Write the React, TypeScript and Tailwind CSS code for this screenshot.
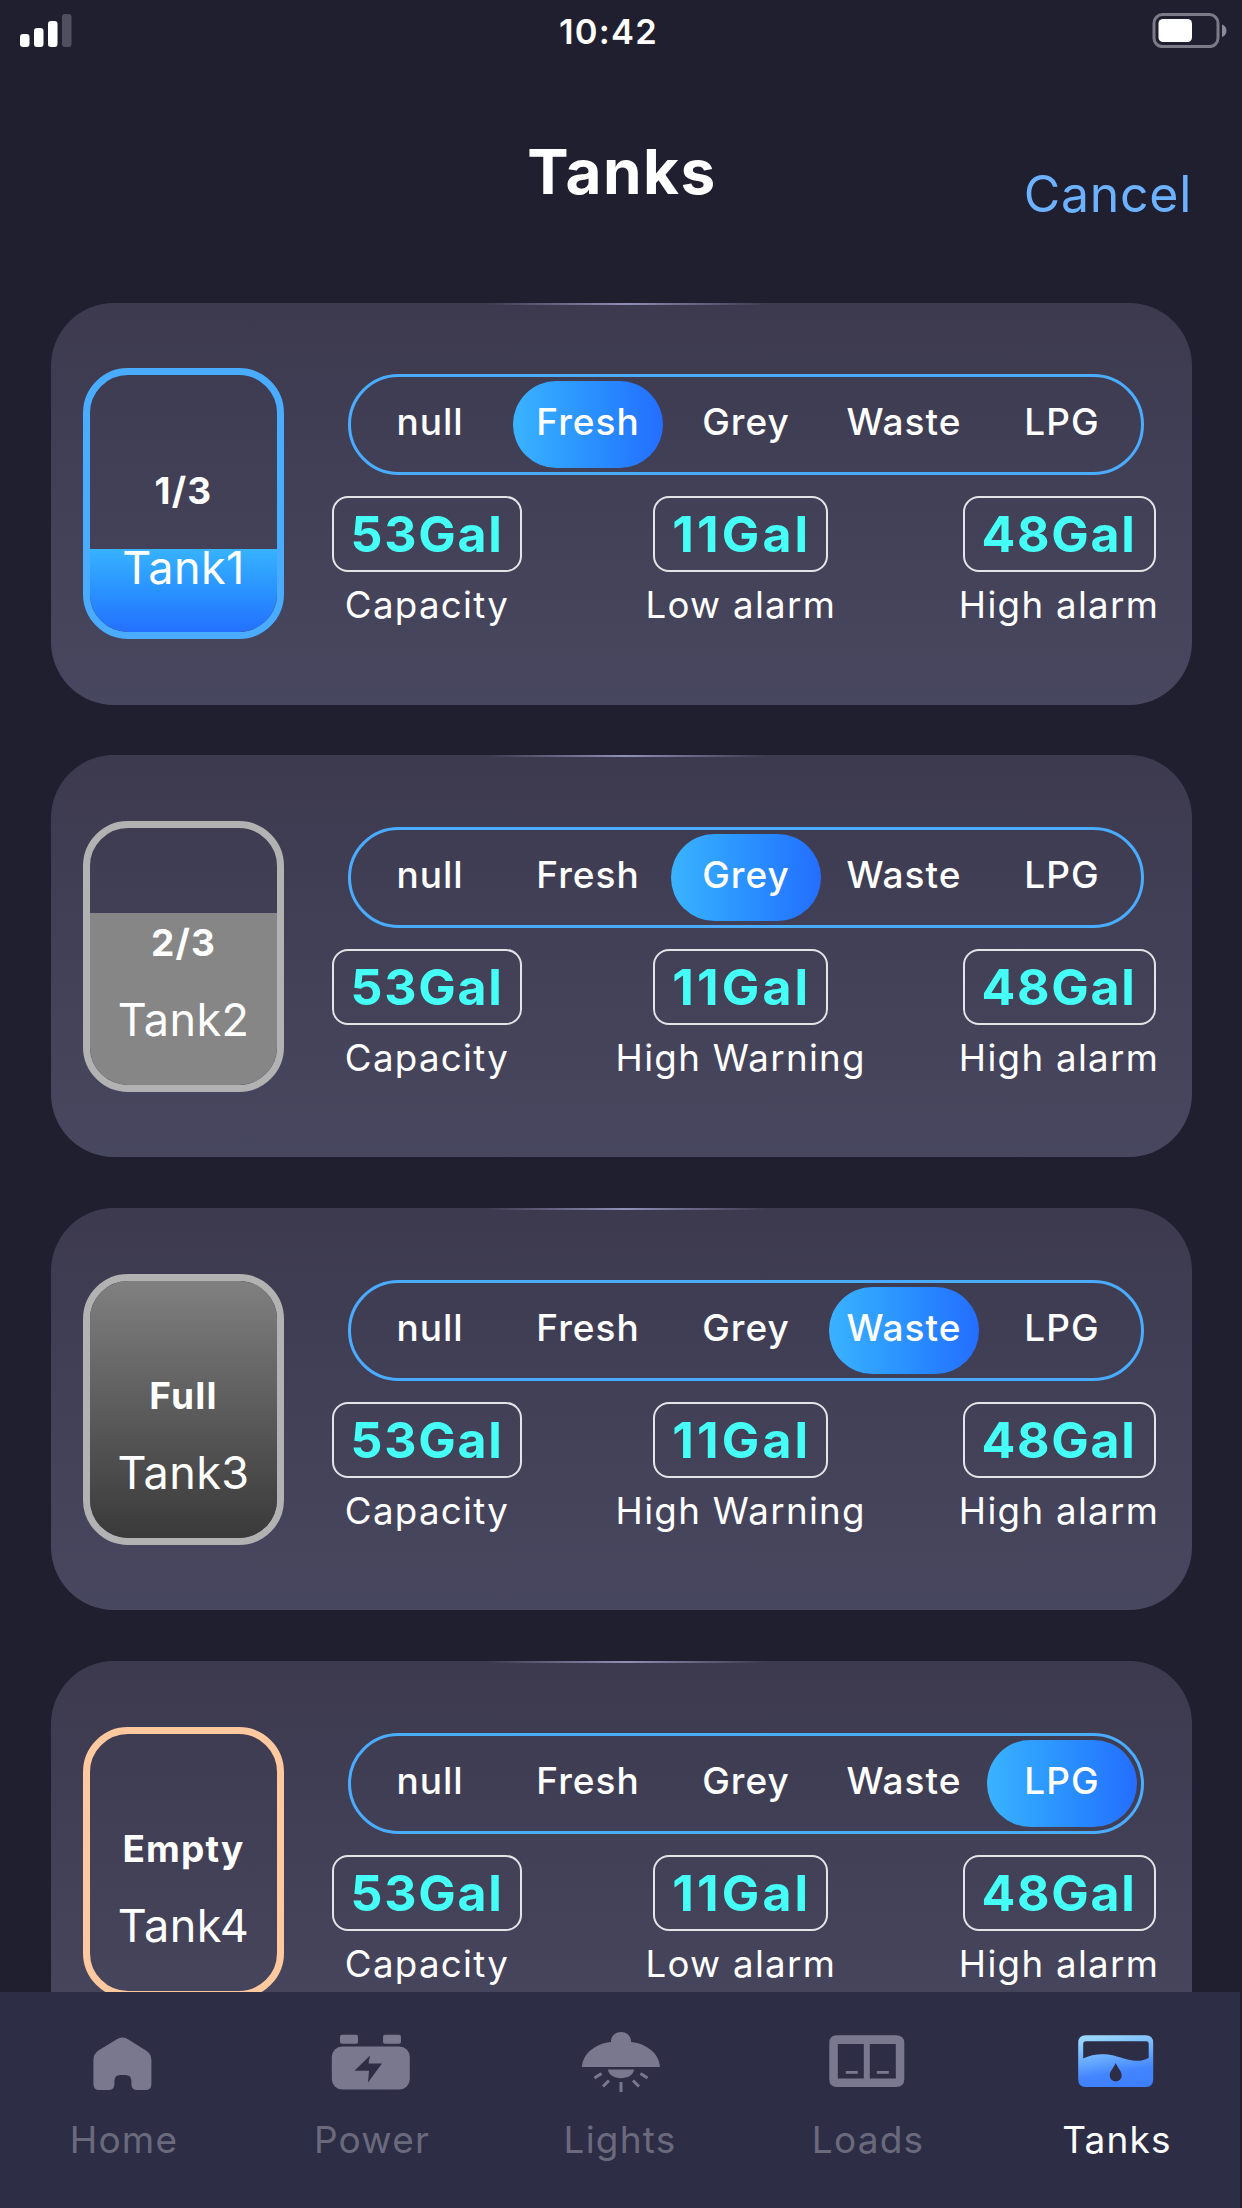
import React from "react";

type Tank = {
  name: string;
  level: string;
  type: string;
  border: string;
  fill: string;
  middle: string;
};

const TYPES = ["null", "Fresh", "Grey", "Waste", "LPG"];

const TANKS: Tank[] = [
  { name: "Tank1", level: "1/3", type: "Fresh", border: "border-[#4aacff]", fill: "h-[83px] bg-linear-to-b from-[#38b2ff] to-[#2570ff]", middle: "Low alarm" },
  { name: "Tank2", level: "2/3", type: "Grey", border: "border-[#b2b2b2]", fill: "h-[172px] bg-[#868686]", middle: "High Warning" },
  { name: "Tank3", level: "Full", type: "Waste", border: "border-[#b2b2b2]", fill: "h-full bg-linear-to-b from-[#808080] to-[#3a3a3a]", middle: "High Warning" },
  { name: "Tank4", level: "Empty", type: "LPG", border: "border-[#ffc9a0]", fill: "h-0", middle: "Low alarm" },
];

function StatusBar() {
  return (
    <div className="flex h-[60px] items-center justify-between pl-[20px] pr-[14px]">
      <svg width="52" height="36" viewBox="0 0 52 36">
        <g fill="#fff">
          <rect x="0" y="22" width="9.5" height="13" rx="3" />
          <rect x="14" y="16" width="9.5" height="19" rx="3" />
          <rect x="28" y="9" width="9.5" height="26" rx="3" />
          <rect x="42" y="2" width="9.5" height="33" rx="3" fill="#504f5e" />
        </g>
      </svg>
      <div className="-ml-[7px] pt-[5px] text-[34.5px] font-semibold leading-none tracking-[1.2px] text-white">10:42</div>
      <svg width="76" height="36" viewBox="0 0 76 36">
        <rect x="2" y="2.6" width="64" height="32" rx="8.5" fill="none" stroke="#7b7a86" strokeWidth="3" />
        <rect x="6.500" y="7" width="33.500" height="23" rx="4.5" fill="#fff" />
        <path d="M70 12.500c6 2 6 10.500 0 12.500z" fill="#8b8a96" />
      </svg>
    </div>
  );
}

function TankGauge({ tank }: { tank: Tank }) {
  return (
    <div className={`relative flex h-[271px] w-[201px] shrink-0 flex-col justify-end overflow-hidden rounded-[45px] border-[7px] ${tank.border}`}>
      <div className={tank.fill} />
      <div className="absolute inset-0 flex flex-col items-center pt-[92.5px] text-white">
        <div className="text-[37px] font-bold leading-[46px] tracking-[1.2px]">{tank.level}</div>
        <div className="mt-[26px] text-[45px] leading-[56px] tracking-[0.4px]">{tank.name}</div>
      </div>
    </div>
  );
}

function TypeSelector({ selected }: { selected: string }) {
  return (
    <div className="ml-[16px] flex h-[101px] w-[796px] rounded-full border-3 border-[#4aacff]">
      {TYPES.map((t) => (
        <div key={t} className="flex flex-1 items-center justify-center">
          <div
            className={`flex h-[87px] w-[150px] items-center justify-center rounded-full pb-[5px] text-[37px] font-medium tracking-[1px] text-white ${
              t === selected ? "bg-linear-to-r from-[#3ab3ff] to-[#256dff]" : ""
            }`}
          >
            {t}
          </div>
        </div>
      ))}
    </div>
  );
}

function Reading({ value, label, col, box }: { value: string; label: string; col: string; box: string }) {
  return (
    <div className={`flex flex-col items-center ${col}`}>
      <div className={`flex h-[76px] items-center justify-center rounded-[16px] border-2 border-[#e4e4e8] pt-px font-bold text-[#45fff6] ${box}`}>
        {value}
      </div>
      <div className="mt-[10px] whitespace-nowrap text-[36.7px] leading-[46px] tracking-[1.3px] text-white">{label}</div>
    </div>
  );
}

function TankCard({ tank }: { tank: Tank }) {
  return (
    <section className="relative flex h-[402px] shrink-0 rounded-[63px] bg-linear-to-b from-[#3d3a4f] to-[#47475f] pl-[32px] pt-[65.5px]">
      <div className="absolute left-[435px] top-0 h-[2px] w-[280px] bg-linear-to-r from-transparent via-[#908fb5] to-transparent" />
      <TankGauge tank={tank} />
      <div className="ml-[48px] flex flex-col pt-[6px]">
        <TypeSelector selected={tank.type} />
        <div className="mt-[21px] flex w-[826.500px] justify-between">
          <Reading value="53Gal" label="Capacity" col="w-[190px]" box="w-[190px] text-[50px] tracking-[1.7px]" />
          <Reading value="11Gal" label={tank.middle} col="w-[250px]" box="w-[175px] pl-[2px] text-[50px] tracking-[3.2px]" />
          <Reading value="48Gal" label="High alarm" col="w-[199px]" box="w-[193px] text-[50px] tracking-[1.7px]" />
        </div>
      </div>
    </section>
  );
}

const HomeIcon = () => (
  <svg width="84" height="66" viewBox="1.6 0 84 66" fill="#79788e">
    <path d="M13 29Q13 23 18 19.500L36 8.500Q42 4.500 48 8.500L65.500 19.500Q71 23 71 29V53Q71 59 65 59H57Q51 59 51 53V50Q51 44 45 44H40Q34 44 34 50V53Q34 59 28 59H19Q13 59 13 53Z" />
  </svg>
);

const PowerIcon = () => (
  <svg width="84" height="66" viewBox="1.5 0.500 84 66" fill="#79788e">
    <rect x="11.500" y="4.300" width="18" height="9" rx="2" />
    <rect x="54.500" y="4.300" width="18" height="9" rx="2" />
    <rect x="3.300" y="16" width="78" height="43" rx="10.500" />
    <path d="M41.500 25L26 40.300H40.500L39.500 52L53.500 33H40Z" fill="#2d2d45" />
  </svg>
);

const LightsIcon = () => (
  <svg width="84" height="66" viewBox="-1 0 84 66" fill="#79788e">
    <path d="M3 36C4 20 20 12 32 11V9Q34 1 42 1T52 9V11C64 12 80 20 81 36Z" />
    <path d="M29 38.500H55C54 50 30 50 29 38.500Z" />
    <g stroke="#79788e" strokeWidth="3">
      <path d="M42 51V61M30 49.500L24 55.500M54 49.500L60 55.500M22.500 42.500L15.500 47M61.500 42.500L68.500 47" />
    </g>
  </svg>
);

const LoadsIcon = () => (
  <svg width="84" height="66" viewBox="1.2 0 84 66" fill="#79788e">
    <path fillRule="evenodd" d="M12 4.300H71Q79.500 4.300 79.500 12V48Q79.500 56 71 56H12Q4.500 56 4.500 48V12Q4.500 4.300 12 4.300ZM13 13V47.500H39V13ZM45 13V47.500H71V13Z" />
    <rect x="21" y="40" width="12" height="2.800" />
    <rect x="52" y="40" width="12" height="2.800" />
  </svg>
);

const TanksIcon = () => (
  <svg width="84" height="66" viewBox="0.3 0 84 66">
    <defs>
      <linearGradient id="tankFill" x1="0.350" y1="0" x2="0.600" y2="1">
        <stop offset="0" stopColor="#9ad7ff" />
        <stop offset="0.400" stopColor="#6aaeff" />
        <stop offset="0.720" stopColor="#4384ff" />
        <stop offset="1" stopColor="#3d80ff" />
      </linearGradient>
    </defs>
    <path fill="url(#tankFill)" fillRule="evenodd" d="M12 4.300H72Q79.500 4.300 79.500 12V48Q79.500 56 72 56H12Q4.500 56 4.500 48V12Q4.500 4.300 12 4.300ZM12 10.300Q9.500 10.300 9.500 13V27.500C18 23 30 22 40 24.500C53 28 63 33 75 27V13Q75 10.300 72.500 10.300ZM42 32C40 37 36 40 36 44.500A6 6 0 0 0 48 44.500C48 40 44 37 42 32Z" />
  </svg>
);

const NAV = [
  { label: "Home", Icon: HomeIcon },
  { label: "Power", Icon: PowerIcon },
  { label: "Lights", Icon: LightsIcon },
  { label: "Loads", Icon: LoadsIcon },
  { label: "Tanks", Icon: TanksIcon },
];

export default function App() {
  return (
    <div className="flex h-[2208px] w-[1242px] flex-col overflow-hidden bg-[#201f30] font-['Inter',sans-serif]">
      <StatusBar />
      <header className="relative flex h-[242.7px] shrink-0 justify-center pl-[2px] pt-[71.500px]">
        <h1 className="text-[62px] font-bold leading-[80px] tracking-[1.5px] text-white">Tanks</h1>
        <button className="absolute right-[50px] top-[102px] text-[50px] leading-[64px] tracking-[0.7px] text-[#6cb2ff]">Cancel</button>
      </header>
      <main className="flex min-h-0 flex-1 flex-col gap-[50.8px] overflow-hidden pl-[51px] pr-[50px]">
        {TANKS.map((t) => (
          <TankCard key={t.name} tank={t} />
        ))}
      </main>
      <nav className="flex h-[216px] w-[1240px] shrink-0 bg-[#2d2d45]">
        {NAV.map(({ label, Icon }) => (
          <div key={label} className="flex flex-1 flex-col items-center pt-[39px]">
            <Icon />
            <div className={`mt-[19.500px] text-[37px] leading-[46px] tracking-[1.2px] ${label === "Tanks" ? "pl-[2px] text-white" : "text-[#6b6a7d]"}`}>
              {label}
            </div>
          </div>
        ))}
      </nav>
    </div>
  );
}
